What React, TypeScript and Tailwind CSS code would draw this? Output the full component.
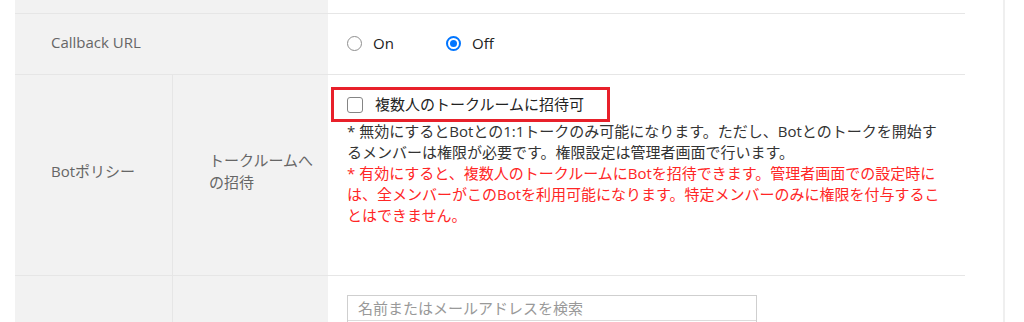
import React from 'react';

const font = { fontFamily: '"Open Sans", "Noto Sans CJK JP", sans-serif' };

const Radio: React.FC<{ checked?: boolean; label: string; className?: string }> = ({ checked, label, className }) => (
  <label className={`flex items-center ${className ?? ''}`}>
    {checked ? (
      <span className="w-[15px] h-[15px] rounded-full border-2 border-[#0075ff] flex items-center justify-center">
        <span className="w-[7px] h-[7px] rounded-full bg-[#0075ff]" />
      </span>
    ) : (
      <span className="w-[15px] h-[15px] rounded-full border border-[#8f8f8f] bg-white" />
    )}
    <span className="ml-[11px] text-[15px] text-[#222]">{label}</span>
  </label>
);

const App: React.FC = () => {
  return (
    <div className="flex w-[1024px] h-[322px] overflow-hidden bg-white" style={font}>
      <div className="w-[15px] shrink-0" />
      <div className="w-[950px] shrink-0 flex flex-col">
        {/* previous row tail */}
        <div className="flex shrink-0 h-[14px] border-b border-[#e6e6e6]">
          <div className="w-[313px] bg-[#f2f2f2]" />
          <div className="flex-1" />
        </div>

        {/* Callback URL */}
        <div className="flex shrink-0 h-[61px] border-b border-[#e6e6e6]">
          <div className="w-[313px] bg-[#f2f2f2] flex items-center pl-[36px] pb-[4px] text-[15px] text-[#666]">Callback URL</div>
          <div className="flex-1 flex items-center pl-[19px] pb-[1px]">
            <Radio label="On" className="w-[99px]" />
            <Radio label="Off" checked />
          </div>
        </div>

        {/* Bot policy */}
        <div className="flex shrink-0 h-[201px] border-b border-[#e6e6e6]">
          <div className="w-[157px] bg-[#f2f2f2] flex items-center pl-[36px] pb-[8px] text-[15px] text-[#666]">Botポリシー</div>
          <div className="w-[156px] bg-[#f2f2f2] border-l border-[#e6e6e6] flex items-center pl-[36px] pb-[8px] text-[15px] leading-[22px] text-[#666]">
            <p>
              トークルームへ
              <br />
              の招待
            </p>
          </div>
          <div className="flex-1 pl-[3px] pt-[12px]">
            <div className="w-[279px] h-[35px] border-[3px] border-[#e8202a] flex items-center pl-[13px] -mb-[1px]">
              <span className="w-[16px] h-[16px] rounded-[3px] border border-[#858585] bg-white" />
              <span className="ml-[12px] text-[15px] text-[#222]">複数人のトークルームに招待可</span>
            </div>
            <div className="pl-[16px] text-[15px] leading-[21px] whitespace-nowrap">
              <p className="text-[#333]">
                * 無効にするとBotとの1:1トークのみ可能になります。ただし、Botとのトークを開始す
                <br />
                るメンバーは権限が必要です。権限設定は管理者画面で行います。
              </p>
              <p className="text-[#ff2626]">
                * 有効にすると、複数人のトークルームにBotを招待できます。管理者画面での設定時に
                <br />
                は、全メンバーがこのBotを利用可能になります。特定メンバーのみに権限を付与するこ
                <br />
                とはできません。
              </p>
            </div>
          </div>
        </div>

        {/* member search */}
        <div className="flex flex-1 min-h-0">
          <div className="w-[157px] bg-[#f2f2f2]" />
          <div className="w-[156px] bg-[#f2f2f2] border-l border-[#e6e6e6]" />
          <div className="flex-1 pl-[19px] pt-[19px]">
            <div className="w-[410px] border border-[#cfcfcf]">
              <div className="h-[24px] flex items-center pl-[10px] text-[15px] text-[#999]">名前またはメールアドレスを検索</div>
              <div className="h-[20px] border-t border-[#dcdcdc]" />
            </div>
          </div>
        </div>
      </div>
      <div className="w-[38px] shrink-0" />
      <div className="w-[2px] shrink-0 bg-[#efefef]" />
      <div className="flex-1" />
    </div>
  );
};

export default App;
